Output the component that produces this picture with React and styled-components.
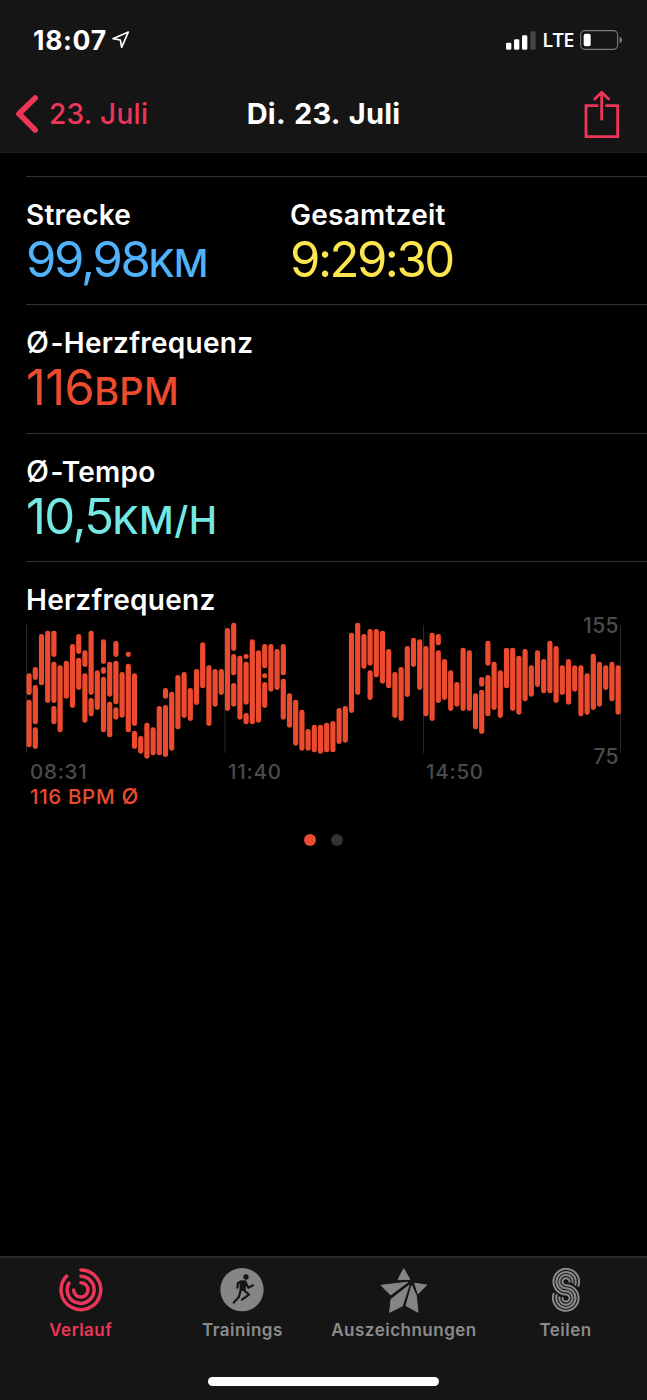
import React from "react";
import styled, { createGlobalStyle } from "styled-components";

const Global = createGlobalStyle`
  *, *::before, *::after { box-sizing: border-box; }
  body { margin: 0; background: #000; }
`;

const pink = "#ed3557";
const orange = "#ec4b2f";

const Screen = styled.div`
  width: 647px;
  height: 1400px;
  display: flex;
  flex-direction: column;
  overflow: hidden;
  background: #000;
  color: #fff;
  font-family: Inter, "Liberation Sans", sans-serif;
`;

const Top = styled.header`
  height: 153px;
  flex: none;
  background: #151515;
  border-bottom: 1px solid #1d1d1d;
`;

const StatusBar = styled.div`
  height: 80px;
  padding: 0 25px 0 33px;
  display: flex;
  align-items: center;
  justify-content: space-between;
`;

const StatusGroup = styled.div`
  display: flex;
  align-items: center;
  gap: ${(p) => p.$gap}px;
`;

const Clock = styled.span`
  font-size: 26.5px;
  line-height: 32px;
  font-weight: 700;
  letter-spacing: 0.7px;
`;

const Carrier = styled.span`
  font-family: "Open Sans", sans-serif;
  font-size: 20px;
  line-height: 28px;
  font-weight: 650;
  letter-spacing: -0.5px;
`;

const NavBar = styled.nav`
  height: 72px;
  padding: 0 16px 4px;
  display: grid;
  grid-template-columns: 1fr auto 1fr;
  align-items: center;
`;

const Back = styled.a`
  display: flex;
  align-items: center;
  gap: 10px;
  color: ${pink};
  font-size: 28px;
  line-height: 34px;
  font-weight: 450;
  letter-spacing: 0.3px;
`;

const Title = styled.h1`
  margin: 0;
  font-size: 29px;
  line-height: 34px;
  font-weight: 700;
  letter-spacing: 0.2px;
  word-spacing: 2px;
`;

const Share = styled.div`
  display: flex;
  justify-content: flex-end;
  padding-right: 11px;
`;

const Content = styled.main`
  flex: 1;
  padding: 23px 0 0 26px;
`;

const Row = styled.section`
  height: ${(p) => p.$height}px;
  border-top: 1px solid #303030;
  padding-top: 21px;
  display: grid;
  grid-template-columns: 264px 1fr;
`;

const Metric = styled.div`
  display: flex;
  flex-direction: column;
`;

const Label = styled.h2`
  margin: 0;
  font-size: 28px;
  line-height: 34px;
  font-weight: 560;
  letter-spacing: 0.25px;
  white-space: nowrap;
`;

const AverageSign = styled.span`
  font-size: 1.07em;
  line-height: 1;
  font-weight: ${(p) => p.$weight};
  letter-spacing: 1.5px;
`;

const Value = styled.div`
  color: ${(p) => p.$color};
  font-size: 49px;
  line-height: 56px;
  font-weight: 390;
  letter-spacing: ${(p) => p.$spacing}px;
  white-space: nowrap;
`;

const Unit = styled.span`
  font-size: 38px;
  font-weight: 460;
  letter-spacing: ${(p) => p.$spacing}px;
`;

const ChartSection = styled.section`
  border-top: 1px solid #303030;
  padding-top: 21px;
`;

const ChartRow = styled.div`
  position: relative;
  height: 142px;
`;

const Plot = styled.svg`
  display: block;
`;

const Limit = styled.span`
  position: absolute;
  right: 28px;
  top: ${(p) => p.$top}px;
  color: #4b4b4b;
  font-size: 21px;
  line-height: 26px;
  font-weight: 500;
  letter-spacing: 0.4px;
`;

const Times = styled.div`
  display: grid;
  grid-template-columns: 198px 198px 1fr;
  padding: 1px 0 0 4px;
  color: #4b4b4b;
  font-size: 20.5px;
  line-height: 24px;
  font-weight: 500;
  letter-spacing: 0.75px;
`;

const Average = styled.div`
  padding: 1px 0 0 4px;
  color: ${orange};
  font-size: 20.5px;
  line-height: 24px;
  font-weight: 500;
  letter-spacing: 0.65px;
`;

const Pager = styled.div`
  display: flex;
  gap: 15px;
  padding: 25px 0 0 278px;
`;

const Dot = styled.i`
  width: 12px;
  height: 12px;
  border-radius: 50%;
  background: ${(p) => (p.$active ? orange : "#343434")};
`;

const Bottom = styled.footer`
  height: 144px;
  flex: none;
  background: #151515;
  border-top: 2px solid #2b2b2b;
  display: flex;
  flex-direction: column;
  align-items: center;
  justify-content: space-between;
  padding-bottom: 14px;
`;

const Tabs = styled.div`
  width: 100%;
  display: grid;
  grid-template-columns: repeat(4, 161.6px);
  padding-top: 9px;
`;

const Tab = styled.div`
  display: flex;
  flex-direction: column;
  align-items: center;
  gap: 6px;
  color: ${(p) => (p.$active ? pink : "#8b8b8b")};
  font-size: 17px;
  line-height: 22px;
  font-weight: 620;
  letter-spacing: 0.5px;
`;

const HomeIndicator = styled.div`
  width: 231px;
  height: 9px;
  border-radius: 5px;
  background: #fff;
`;

// One entry per column; each pair is the top and bottom of a segment, in thirds of a pixel.
const columns = [
  [190, 255, 269, 412], [171, 210, 225, 343, 352, 417], [72, 226], [62, 279],
  [62, 141, 155, 279, 288, 343], [166, 367], [152, 266], [102, 294],
  [72, 132, 143, 240], [121, 171, 190, 338], [62, 255, 264, 319], [181, 300],
  [88, 162, 171, 192, 200, 367], [155, 260, 275, 382], [93, 141, 152, 283, 292, 329], [186, 323],
  [125, 141, 161, 367], [190, 348, 362, 417], [378, 431], [338, 446],
  [352, 436], [288, 436], [234, 266, 285, 441], [245, 422],
  [195, 358], [186, 324], [234, 333], [177, 285],
  [97, 235], [166, 348], [177, 290], [177, 255],
  [54, 303], [38, 123, 132, 196, 219, 290], [137, 329], [132, 147, 155, 284, 309, 343],
  [88, 343], [121, 338], [102, 175, 190, 205, 216, 294], [102, 245],
  [117, 240], [102, 196, 206, 329], [250, 353], [269, 407],
  [299, 422], [357, 422], [344, 427], [344, 431],
  [338, 427], [333, 427], [294, 402], [288, 398],
  [68, 309], [38, 255], [72, 176], [57, 167, 181, 270],
  [57, 202], [62, 221], [117, 235], [186, 324],
  [171, 333], [108, 261], [83, 171], [88, 240],
  [108, 319], [68, 333], [72, 106, 121, 279], [147, 270],
  [181, 303], [216, 290], [113, 303], [121, 303],
  [250, 358], [201, 230, 239, 372], [92, 167, 195, 319], [155, 300],
  [181, 324], [113, 235], [113, 303], [137, 314],
  [117, 274], [166, 260], [121, 231], [147, 250],
  [92, 250], [108, 279], [166, 255], [147, 284],
  [166, 245], [166, 319], [190, 314], [131, 300],
  [155, 290], [166, 240], [155, 274], [166, 314],
];

function HeartRatePlot() {
  return (
    <Plot width="600" height="142" viewBox="0 0 600 142">
      {[0.5, 199, 397.5, 594.5].map((x) => (
        <path key={x} d={`M${x} 8V136`} stroke="#292929" strokeWidth="1" />
      ))}
      {columns.map((segments, i) => {
        const bars = [];
        for (let s = 0; s < segments.length; s += 2) {
          bars.push(
            <rect
              key={`${i}-${s}`}
              x={0.5 + i * 6.2}
              y={segments[s] / 3 - 7}
              width="5.2"
              height={(segments[s + 1] - segments[s]) / 3}
              rx="2.4"
              fill={orange}
            />
          );
        }
        return bars;
      })}
    </Plot>
  );
}

const LocationIcon = () => (
  <svg width="20" height="20" viewBox="333 90 60 60">
    <path d="M339 116 L385 96 L365 142 L361 120 Z" fill="none" stroke="#fff" strokeWidth="5" strokeLinejoin="round" />
  </svg>
);

const SignalIcon = () => (
  <svg width="30" height="19" viewBox="552 91 90 57">
    <rect x="552" y="126" width="16" height="21" rx="4" fill="#fff" />
    <rect x="576" y="116" width="16" height="31" rx="4" fill="#fff" />
    <rect x="600" y="104" width="16" height="43" rx="4" fill="#fff" />
    <rect x="625" y="92" width="16" height="55" rx="4" fill="#454545" />
  </svg>
);

const BatteryIcon = () => (
  <svg width="42" height="20" viewBox="771 90 126 60">
    <rect x="773" y="92" width="111" height="56" rx="13" fill="none" stroke="#7b7b7b" strokeWidth="3.4" />
    <rect x="782" y="101" width="21" height="38" rx="6" fill="#fff" />
    <path d="M890 110 Q897 113 897 120 Q897 127 890 130 Z" fill="#858585" />
  </svg>
);

const ChevronIcon = () => (
  <svg width="23" height="38" viewBox="48 283 69 114">
    <path d="M105.5 292 L57 339.5 L105.5 388" fill="none" stroke={pink} strokeWidth="17" strokeLinecap="round" strokeLinejoin="round" />
  </svg>
);

const ShareIcon = () => (
  <svg width="36" height="49" viewBox="783 270 108 147">
    <g fill="none" stroke={pink} strokeWidth="8.5">
      <path d="M826 317 H789 V410 H884 V317 H847" strokeLinejoin="miter" />
      <path d="M836 278 V358 M815 297 L836 277 L857 297" strokeLinecap="round" strokeLinejoin="round" />
    </g>
  </svg>
);

const RingsIcon = () => (
  <svg width="44" height="46" viewBox="178 50 132 138">
    <g fill="none" stroke="currentColor" strokeWidth="10.5" strokeLinecap="round">
      <path d="M244 59 A59.5 59.5 0 1 1 201 77" />
      <path d="M244 78 A40.5 40.5 0 1 1 208 98" />
      <path d="M244 97 A21.5 21.5 0 1 1 222 119" />
    </g>
  </svg>
);

const RunnerIcon = () => (
  <svg width="44" height="46" viewBox="662 50 132 138">
    <circle cx="728" cy="118" r="65" fill="#858585" />
    <g fill="none" stroke="#151515" strokeWidth="6.5" strokeLinecap="round" strokeLinejoin="round">
      <circle cx="740" cy="80" r="8" fill="#151515" stroke="none" />
      <path d="M724 94 L738 93 L736 118 L724 118 Z" fill="#151515" />
      <path d="M724 94 L716 98 L714 112" />
      <path d="M739 96 L747 112 L761 105" />
      <path d="M733 119 L749 133 L728 148" />
      <path d="M724 119 L719 139 L703 157" />
    </g>
  </svg>
);

const StarIcon = () => (
  <svg width="50" height="46" viewBox="169 50 150 138">
    <g fill="#858585" stroke="#858585" strokeWidth="3" strokeLinejoin="round">
      <path d="M243 55 L261.5 87 L226 88 Z" />
      <path d="M175 105 L255 95.5 L204 134 Z" />
      <path d="M276 98.5 L312 104 L286 130 Z" />
      <path d="M259 105 L205 147 L201 186 L239 167 Z" />
      <path d="M267 106 L250 166 L286 186 L281 136 Z" />
    </g>
  </svg>
);

const SharingIcon = () => (
  <svg width="44" height="46" viewBox="662 50 132 138">
    <g fill="none" stroke="#8b8b8b" strokeWidth="6" strokeLinecap="round">
      <path d="M765 107 A38.5 38.5 0 1 0 728 132.5 A10.5 10.5 0 1 1 717.5 143" />
      <path d="M756 103 A29 29 0 1 0 728 123 A20 20 0 1 1 708 141" />
      <path d="M748 96 A20 20 0 1 0 728 114 A29 29 0 1 1 700 134" />
      <path d="M738.5 94 A10.5 10.5 0 1 0 728 104.5 A38.5 38.5 0 1 1 691 130" />
    </g>
  </svg>
);

export default function App() {
  return (
    <Screen>
      <Global />
      <Top>
        <StatusBar>
          <StatusGroup $gap={4}>
            <Clock>18:07</Clock>
            <LocationIcon />
          </StatusGroup>
          <StatusGroup $gap={6}>
            <SignalIcon />
            <Carrier>LTE</Carrier>
            <BatteryIcon />
          </StatusGroup>
        </StatusBar>
        <NavBar>
          <Back><ChevronIcon />23. Juli</Back>
          <Title>Di. 23. Juli</Title>
          <Share><ShareIcon /></Share>
        </NavBar>
      </Top>
      <Content>
        <Row $height={128}>
          <Metric>
            <Label>Strecke</Label>
            <Value $color="#4fb2fb" $spacing={-2.3}>99,98<Unit $spacing={-0.8}>KM</Unit></Value>
          </Metric>
          <Metric>
            <Label>Gesamtzeit</Label>
            <Value $color="#fde54f" $spacing={-2.5}>9:29:30</Value>
          </Metric>
        </Row>
        <Row $height={129}>
          <Metric>
            <Label><AverageSign $weight={480}>Ø</AverageSign>-Herzfrequenz</Label>
            <Value $color={orange} $spacing={-0.7}>116<Unit $spacing={0.2}>BPM</Unit></Value>
          </Metric>
        </Row>
        <Row $height={128}>
          <Metric>
            <Label><AverageSign $weight={480}>Ø</AverageSign>-Tempo</Label>
            <Value $color="#73e8e4" $spacing={-1.6}>10,5<Unit $spacing={0.5}>KM/H</Unit></Value>
          </Metric>
        </Row>
        <ChartSection>
          <Label>Herzfrequenz</Label>
          <ChartRow>
            <HeartRatePlot />
            <Limit $top={-4}>155</Limit>
            <Limit $top={127}>75</Limit>
          </ChartRow>
          <Times><span>08:31</span><span>11:40</span><span>14:50</span></Times>
          <Average>116 BPM <AverageSign $weight={450}>Ø</AverageSign></Average>
          <Pager><Dot $active /><Dot /></Pager>
        </ChartSection>
      </Content>
      <Bottom>
        <Tabs>
          <Tab $active><RingsIcon />Verlauf</Tab>
          <Tab><RunnerIcon />Trainings</Tab>
          <Tab><StarIcon />Auszeichnungen</Tab>
          <Tab><SharingIcon />Teilen</Tab>
        </Tabs>
        <HomeIndicator />
      </Bottom>
    </Screen>
  );
}
